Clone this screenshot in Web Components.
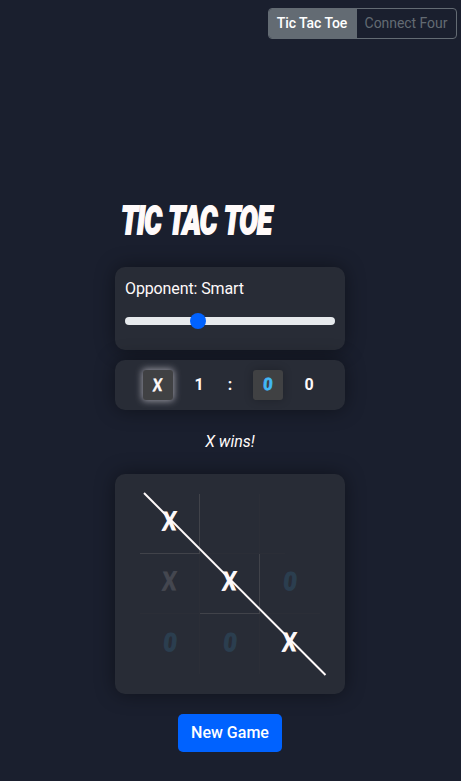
<!DOCTYPE html>
<html lang="en"><head><meta charset="utf-8"><title>Tic Tac Toe</title>
<style>
body{margin:0;background:#1a1f2e;color:#fffafa;font:16px/24px Roboto,"Liberation Sans",sans-serif}
</style></head><body>
<game-app></game-app>
<script>
const define=(name,html,setup)=>customElements.define(name,class extends HTMLElement{
  constructor(){super();this.attachShadow({mode:'open'}).innerHTML=html;}
  connectedCallback(){if(setup)setup(this,this.shadowRoot);}
});
define('game-switch',`<style>
:host{display:flex;box-sizing:border-box;width:189px;height:31px;border:1px solid #636b73;border-radius:4px;overflow:hidden;font-size:14px;line-height:29px;color:#636b73;letter-spacing:-.05px}
span{flex:0 0 88px;text-align:center;white-space:nowrap}
.on{background:#636b73;color:#fff;font-weight:500;text-indent:-2px}
span+span{flex:1;text-indent:-1px}
</style><span class="on">Tic Tac Toe</span><span>Connect Four</span>`);
define('game-title',`<style>
:host{display:block;height:48px;padding-left:6px}
h1{margin:0;font:italic 900 39.5px/48px Roboto,sans-serif;letter-spacing:-1.2px;word-spacing:3px;white-space:nowrap;width:max-content;transform:scaleX(.698);transform-origin:0 50%;-webkit-text-stroke:1.8px}
</style><h1><slot></slot></h1>`);
define('game-card',`<style>
:host{display:block;box-sizing:border-box;width:230px;border-radius:10px;background:#282c36;box-shadow:0 0 20px rgba(0,0,0,.42)}
</style><slot></slot>`);
define('level-slider',`<style>
:host{display:block;padding:10px;height:63px;letter-spacing:-.12px}
.track{height:8px;border-radius:4px;background:#e7eaed;margin-top:16px;display:flex;align-items:center}
i{width:16px;height:16px;border-radius:50%;background:#0062ff;margin-left:65px}
</style><slot></slot><div class="track"><i></i></div>`);
define('player-mark',`<style>
:host{display:inline-flex;align-items:center;justify-content:center}
:host([kind="0"]){color:#42b8f5}
:host([dim]){opacity:.13}
span{display:block;font:italic 700 25px/1 Roboto,sans-serif;-webkit-text-stroke:1.2px;transform:translate(1px,0) skewX(2deg) scaleX(.95)}
:host([kind="X"]) span{font:700 25px/1 Lato,sans-serif;-webkit-text-stroke:1.3px;transform:translate(0,-1px) rotate(-2deg) skewX(-6deg) scaleX(.78)}
:host([small]) span,:host([small][kind="X"]) span{font-size:17px;-webkit-text-stroke:.7px}
:host([small][kind="0"]) span{transform:translateY(-1px) skewX(4deg)}
</style><span></span>`,(el,r)=>{r.querySelector('span').textContent=el.getAttribute('kind')});
define('score-board',`<style>
:host{display:grid;grid-template-columns:30px 52px 10px 18px 30px 52px;height:50px;padding-left:28px;align-items:center;font-weight:700;text-align:center}
player-mark{width:30px;height:30px;background:#404143;border-radius:3px;box-shadow:0 0 10px rgba(0,0,0,.24)}
.turn{box-shadow:0 0 7px 1px #9b9ba4}
.at{grid-column:5}
</style><player-mark class="turn" kind="X" small></player-mark><span>1</span><span>:</span><player-mark class="at" kind="0" small></player-mark><span>0</span>`);
define('game-grid',`<style>
:host{display:block;position:relative;height:220px}
.cells{display:grid;grid-template:60px 60px 62px/repeat(3,60px);padding:17px 26px 21px 24px}
svg{position:absolute;inset:0;width:230px;height:220px}
</style><svg fill="none"><g stroke="#2b2e37"><path d="M144.5 20v60M85 79.5h85M25 139.5h60M84.5 80v120M144.5 140v60M145 139.5h60"/></g><g stroke="#41434a"><path d="M84.5 20v60M25 79.5h60M144.5 80v60M85 139.5h60"/></g></svg>
<div class="cells"><player-mark kind="X"></player-mark><i></i><i></i><player-mark kind="X" dim></player-mark><player-mark kind="X"></player-mark><player-mark kind="0" dim></player-mark><player-mark kind="0" dim></player-mark><player-mark kind="0" dim></player-mark><player-mark kind="X"></player-mark></div>
<svg fill="none"><path d="M29 19L210.5 201" stroke="#fffafa" stroke-width="2"/></svg>`);
define('game-button',`<style>
:host{display:block;width:104px;margin:0 auto}
button{display:block;width:104px;height:38px;padding:0;border:0;border-radius:5px;background:#0062ff;color:#fff;font:500 16px/38px Roboto,sans-serif}
</style><button><slot></slot></button>`);
define('game-app',`<style>
:host{display:flex;flex-direction:column;box-sizing:border-box;height:781px;padding-top:8px}
game-switch{align-self:flex-end;margin-right:4px}
main{width:230px;margin:158px 0 0 115px}
game-title{margin-bottom:22px}
.score{margin-top:10px}
.status{text-align:center;font-style:italic;line-height:24px;margin:20px 0}
game-button{margin-top:20px}
</style><game-switch></game-switch><main><game-title>TIC TAC TOE</game-title>
<game-card><level-slider>Opponent: Smart</level-slider></game-card>
<game-card class="score"><score-board></score-board></game-card>
<div class="status">X wins!</div>
<game-card><game-grid></game-grid></game-card>
<game-button>New Game</game-button></main>`);
</script></body></html>
